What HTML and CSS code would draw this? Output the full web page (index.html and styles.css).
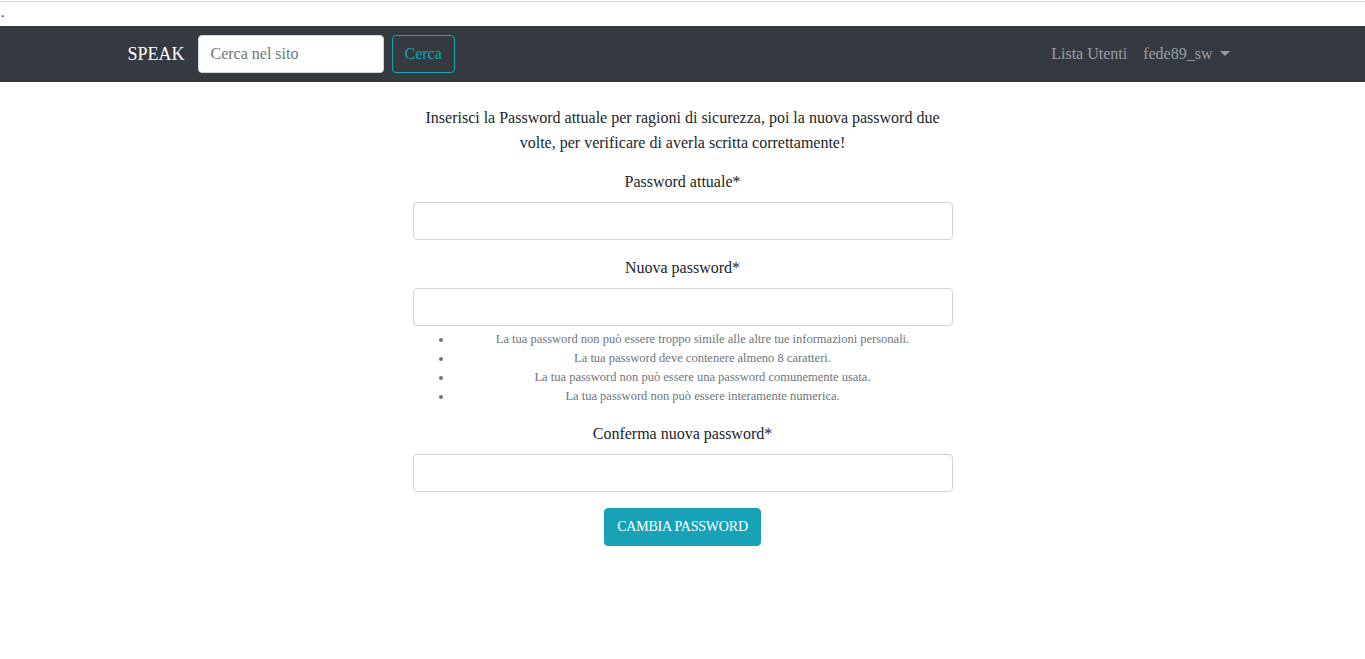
FILE: index.html
```html
<!DOCTYPE html>
<html lang="it">
<head>
<meta charset="utf-8">
<title>Cambia password</title>
<link rel="stylesheet" href="styles.css">
</head>
<body>
<div class="topline"></div>
<div class="dot">.</div>
<nav class="navbar">
  <div class="container nav-inner">
    <div class="nav-left">
      <a class="brand" href="#">SPEAK</a>
      <form class="search">
        <input class="search-input" type="text" placeholder="Cerca nel sito">
        <button class="btn-outline" type="button">Cerca</button>
      </form>
    </div>
    <div class="nav-right">
      <a class="nav-link" href="#">Lista Utenti</a>
      <a class="nav-link dropdown" href="#">fede89_sw<span class="caret"></span></a>
    </div>
  </div>
</nav>
<main class="main">
  <div class="form-col">
    <p class="intro">Inserisci la Password attuale per ragioni di sicurezza, poi la nuova password due volte, per verificare di averla scritta correttamente!</p>
    <form class="pw-form">
      <div class="group">
        <label class="label">Password attuale*</label>
        <input class="field" type="password">
      </div>
      <div class="group">
        <label class="label">Nuova password*</label>
        <input class="field" type="password">
        <ul class="help">
          <li>La tua password non può essere troppo simile alle altre tue informazioni personali.</li>
          <li>La tua password deve contenere almeno 8 caratteri.</li>
          <li>La tua password non può essere una password comunemente usata.</li>
          <li>La tua password non può essere interamente numerica.</li>
        </ul>
      </div>
      <div class="group">
        <label class="label">Conferma nuova password*</label>
        <input class="field" type="password">
      </div>
      <button class="btn-info" type="button">CAMBIA PASSWORD</button>
    </form>
  </div>
</main>
</body>
</html>
```
FILE: styles.css
```css
* { box-sizing: border-box; }
html, body { margin: 0; padding: 0; }
body {
  font-family: "Liberation Serif", "DejaVu Serif", serif;
  font-size: 16px;
  line-height: 1.5;
  color: #212529;
  background: #fff;
}
.topline { height: 2px; border-top: 1px solid #fff; border-bottom: 1px solid #dcdcdc; }
.dot { height: 24px; line-height: 22px; padding-left: 1px; font-size: 14px; }
.navbar { background: #343a40; height: 56px; }
.container { width: 1140px; margin: 0 auto; padding: 0 15px; }
.nav-inner { display: flex; align-items: center; justify-content: space-between; height: 56px; }
.nav-left { display: flex; align-items: center; }
.brand { color: #fff; text-decoration: none; font-size: 18px; margin-right: 13px; line-height: 30px; }
.search { display: flex; align-items: center; gap: 8px; }
.search-input {
  width: 186px; height: 38px; border: 1px solid #ced4da; border-radius: 4px;
  padding: 6px 12px; font-family: inherit; font-size: 16px; color: #495057; background: #fff;
}
.search-input::placeholder { color: #6c757d; }
.btn-outline {
  height: 38px; padding: 6px 12px; border: 1px solid #17a2b8; border-radius: 4px;
  background: transparent; color: #17a2b8; font-family: inherit; font-size: 16px;
}
.nav-right { display: flex; align-items: center; }
.nav-link { color: rgba(255,255,255,.5); text-decoration: none; padding: 8px; font-size: 16px; }
.caret {
  display: inline-block; margin-left: 7px; vertical-align: 3px;
  border-top: 5px solid rgba(255,255,255,.5); border-left: 5px solid transparent; border-right: 5px solid transparent;
}
.main { display: flex; justify-content: center; padding-top: 23px; }
.form-col { width: 540px; text-align: center; }
.intro { margin: 0 0 15px; line-height: 25px; padding: 0 12px; }
.group { margin-bottom: 16px; }
.label { display: block; margin-bottom: 8px; }
.field {
  display: block; width: 100%; height: 38px; border: 1px solid #ced4da; border-radius: 4px;
  padding: 6px 12px; font-size: 16px; background: #fff;
}
.help { margin: 4px 0 0; padding-left: 40px; font-size: 12.5px; line-height: 19px; color: #6c757d; }
.help li { text-align: center; }
.btn-info {
  background: #17a2b8; color: #fff; border: 1px solid #17a2b8; border-radius: 4px;
  height: 38px; padding: 6px 12px; font-family: inherit; font-size: 14px; letter-spacing: -0.2px;
}
```
